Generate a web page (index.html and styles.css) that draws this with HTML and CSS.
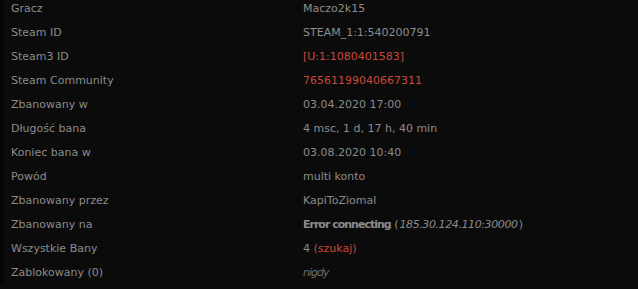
FILE: index.html
```html
<!doctype html>
<html lang="pl">

<head>
    <meta charset="utf-8" />
    <title>Ban - Maczo2k15</title>
    <link rel="stylesheet" href="styles.css">
</head>

<body>
    <div class="ban-panel">
        <div class="ban-row">
            <div class="ban-label">Gracz</div>
            <div class="ban-value">Maczo2k15</div>
        </div>
        <div class="ban-row">
            <div class="ban-label">Steam ID</div>
            <div class="ban-value">STEAM_1:1:540200791</div>
        </div>
        <div class="ban-row">
            <div class="ban-label">Steam3 ID</div>
            <div class="ban-value"><a class="red-link" href="#">[U:1:1080401583]</a></div>
        </div>
        <div class="ban-row">
            <div class="ban-label">Steam Community</div>
            <div class="ban-value"><a class="red-link" href="#">76561199040667311</a></div>
        </div>
        <div class="ban-row">
            <div class="ban-label">Zbanowany w</div>
            <div class="ban-value">03.04.2020 17:00</div>
        </div>
        <div class="ban-row">
            <div class="ban-label">Długość bana</div>
            <div class="ban-value">4 msc, 1 d, 17 h, 40 min</div>
        </div>
        <div class="ban-row">
            <div class="ban-label">Koniec bana w</div>
            <div class="ban-value">03.08.2020 10:40</div>
        </div>
        <div class="ban-row">
            <div class="ban-label">Powód</div>
            <div class="ban-value">multi konto</div>
        </div>
        <div class="ban-row">
            <div class="ban-label">Zbanowany przez</div>
            <div class="ban-value">KapiToZiomal</div>
        </div>
        <div class="ban-row">
            <div class="ban-label">Zbanowany na</div>
            <div class="ban-value"><b>Error connecting</b> (<i class="server-ip">185.30.124.110:30000</i>)</div>
        </div>
        <div class="ban-row">
            <div class="ban-label">Wszystkie Bany</div>
            <div class="ban-value">4 <a class="red-link" href="#">(szukaj)</a></div>
        </div>
        <div class="ban-row">
            <div class="ban-label">Zablokowany (0)</div>
            <div class="ban-value"><i class="muted">nigdy</i></div>
        </div>
    </div>
</body>

</html>
```

FILE: styles.css
```css
html,
body {
    margin: 0;
    background: #0b0b0b;
}

body {
    font-family: "DejaVu Sans", Verdana, sans-serif;
    font-size: 11px;
    color: #8c8c8c;
    overflow: hidden;
}

/* Ban details table */
.ban-panel {
    margin-top: -4px;
    border-left: 4px solid #050505;
    border-bottom: 1px solid #060606;
}

.ban-row {
    display: grid;
    grid-template-columns: 299px 1fr;
    height: 24px;
    align-items: center;
}

.ban-label {
    padding-left: 7px;
}

.ban-value b {
    font-weight: 700;
    letter-spacing: -1px;
}

.ban-value i {
    font-style: italic;
    letter-spacing: -1px;
    padding-right: 1px;
}

.ban-value .server-ip {
    letter-spacing: -0.4px;
    padding-left: 1px;
}

.red-link {
    color: #c8493c;
    text-decoration: none;
}

.muted {
    color: #6c6c6c;
}
```
